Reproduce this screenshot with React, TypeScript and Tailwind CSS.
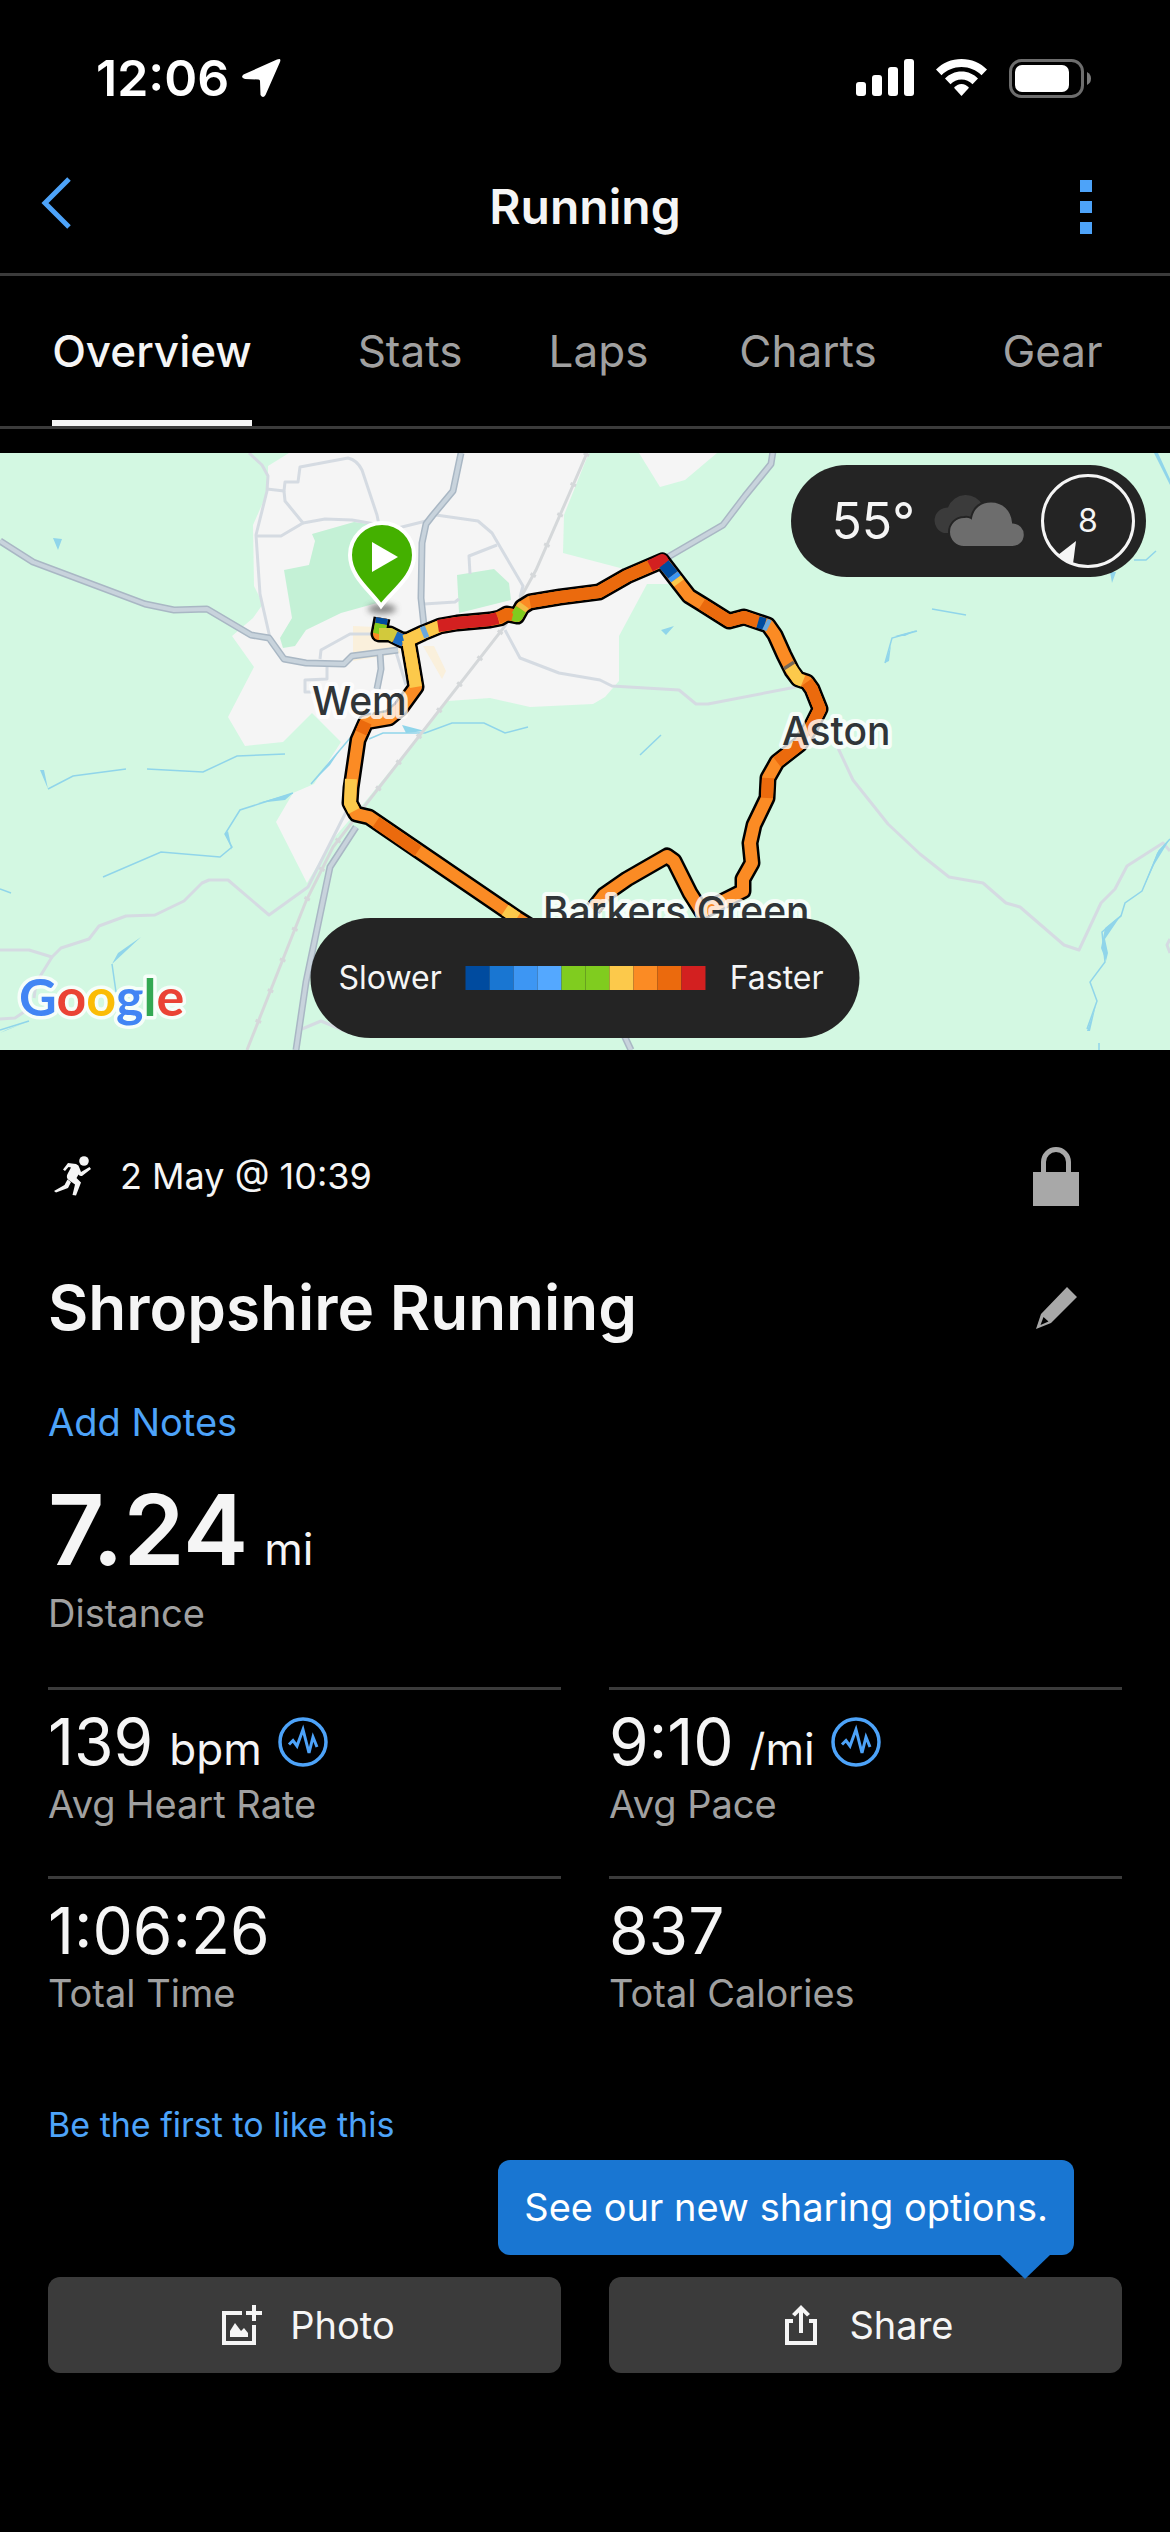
const tabs = [
  { label: "Overview", active: true },
  { label: "Stats", active: false },
  { label: "Laps", active: false },
  { label: "Charts", active: false },
  { label: "Gear", active: false },
];

const stats = [
  { value: "139", unit: "bpm", label: "Avg Heart Rate", pulse: true },
  { value: "9:10", unit: "/mi", label: "Avg Pace", pulse: true },
  { value: "1:06:26", unit: "", label: "Total Time", pulse: false },
  { value: "837", unit: "", label: "Total Calories", pulse: false },
];

const paceColors = [
  "bg-[#004b9f]",
  "bg-[#1976d2]",
  "bg-[#3d96f3]",
  "bg-[#54a8ff]",
  "bg-[#80cc1f]",
  "bg-[#80cc1f]",
  "bg-[#fcc94b]",
  "bg-[#fb8b24]",
  "bg-[#eb6a0d]",
  "bg-[#d32020]",
];

const loopPath =
  "M382 165 L379 181 L390 181 L402 187 L408 187 L423 180 L440 173 L457 170 L490 167 L500 165 L507 161 L517 163 L522 154 L530 149 L560 144 L599 139 L627 123 L662 108 L675 125 L689 143 L702 151 L729 168 L744 164 L768 172 L775 182 L784 202 L792 218 L798 226 L807 229 L812 236 L820 256 L811 274 L800 291 L777 309 L768 325 L767 345 L754 372 L750 390 L752 410 L743 426 L743 438 L723 448 L702 459 L690 440 L674 408 L667 403 L627 426 L604 442 L593 456";

const southPath =
  "M408 187 L412 210 L416 234 L400 256 L389 265 L366 269 L358 287 L351 335 L350 350 L356 361 L369 364 L517 465 L560 492";

const routeSegments = [
  { d: "M382 165 L381 171", color: "#004b9f" },
  { d: "M381 171 L379 181", color: "#80cc1f" },
  { d: "M379 181 L390 181 L395 184", color: "#d2c93c" },
  { d: "M395 184 L404 188", color: "#1c6dc4" },
  { d: "M404 188 L408 187 L423 180 L440 173", color: "#fcc94b" },
  { d: "M422 180 L427 178", color: "#6aa7dc" },
  { d: "M438 173 L457 170 L490 167 L498 165", color: "#d32020" },
  { d: "M498 165 L507 161 L513 162", color: "#eb6a0d" },
  { d: "M513 162 L517 163 L521 156", color: "#80cc1f" },
  { d: "M521 156 L524 152", color: "#f2bd45" },
  { d: "M530 149 L560 144 L599 139 L627 123 L652 112", color: "#eb6a0d" },
  { d: "M650 113 L662 107 L664 111", color: "#d32020" },
  { d: "M664 111 L673 122", color: "#004b9f" },
  { d: "M673 122 L676 126", color: "#3d96f3" },
  { d: "M676 126 L679 130", color: "#fcc94b" },
  { d: "M702 151 L729 168 L744 164 L758 169", color: "#eb6a0d" },
  { d: "M758 169 L765 171", color: "#004b9f" },
  { d: "M765 171 L769 173", color: "#6aa7dc" },
  { d: "M788 211 L790 214", color: "#776a5a" },
  { d: "M790 214 L798 226 L803 228", color: "#fcc94b" },
  { d: "M807 229 L812 236 L820 256 L811 274 L800 291 L777 309", color: "#eb6a0d" },
  { d: "M768 325 L767 345", color: "#eb6a0d" },
  { d: "M408 187 L412 210 L416 234", color: "#fcc94b" },
  { d: "M366 269 L361 280", color: "#eb6a0d" },
  { d: "M351 326 L350 350 L354 358", color: "#fcc94b" },
  { d: "M376 369 L418 398", color: "#eb6a0d" },
  { d: "M505 457 L517 465", color: "#fcc94b" },
];

const mainRoads = [
  "M0 88 L33 109 L145 151 L174 157 L207 156 L251 182 L269 185 L284 206 L306 210 L344 211 L352 203 L398 197",
  "M461 0 L453 38 L433 62 L426 71 L422 90 L421 145 L424 173",
  "M380 200 L381 216 L377 236",
  "M356 374 L330 414 L306 529 L296 597",
  "M773 -2 L771 11 L745 43 L723 72 L668 104",
  "M623 580 L631 597",
];

const minorRoads = [
  "M249 0 L262 12 L268 23 L267 38 L256 82 L260 141 L270 185",
  "M267 36 L284 38 L285 29 L298 29 L300 14 L348 5 Q357 7 362 17 L377 62 L379 72",
  "M284 38 L285 48 L303 70 L281 83 L256 83",
  "M303 70 L325 66 L352 67 L398 75 L426 68 L436 62 L478 68 L492 80 L523 133 L520 144",
  "M497 92 L469 103 L470 121",
  "M424 151 L455 149 L459 146",
  "M320 206 L321 197 L350 181 L375 181",
  "M327 212 L327 226 L305 227 L305 239 L318 239",
  "M396 199 L406 232",
  "M505 177 L520 205 L559 220 L600 227 L612 233 L679 237 L696 251 L708 251 L796 234",
  "M838 295 L853 327 L888 371 L920 401 L949 424 L983 430 L1006 450 L1020 454 L1064 492 L1079 497 L1101 450 L1115 436 L1127 413 L1163 390 L1170 398",
  "M1170 486 L1167 492 L1170 500",
  "M0 497 L29 497 L52 504 L61 495 L89 486 L99 473 L126 463 L155 462 L184 448 L202 430 L209 427 L228 427 L269 462 L308 434 L346 359",
  "M52 504 L36 530 L34 545",
  "M0 566 L15 565 L30 555",
  "M302 576 L321 568 L350 580",
];

const streams = [
  "M48 336 L73 323 L126 316",
  "M147 316 L203 319 L237 303 L285 301",
  "M351 284 L311 331",
  "M293 340 L240 357 L225 381 L232 394 L220 404 L161 399 L103 424",
  "M369 286 L383 280 L425 280 L452 270 L484 270 L505 280 L528 274",
  "M112 511 L116 539",
  "M0 436 L11 440",
  "M0 577 L29 568",
  "M640 302 L661 282",
  "M932 156 L966 162",
  "M885 210 L892 185 L917 178",
  "M1134 107 L1146 107 L1156 98",
  "M1170 386 L1159 398 L1142 438 L1125 450 L1121 463 L1102 479 L1105 509 L1090 529 L1097 548 L1087 576",
  "M1099 590 L1099 597",
];

const ponds =
  "M53 85 L62 86 L58 97Z M661 177 L674 173 L666 182Z M40 317 L44 317 L48 336Z M1110 119 L1116 119 L1112 130Z M402 272 L425 278 L406 280Z M141 484 L112 511 L118 500Z M311 331 L340 297 L330 312Z M293 340 L258 350 L285 347Z M225 381 L232 397 L228 378Z M885 210 L891 192 L889 208Z M895 183 L917 177 L905 183Z M1154 0 L1170 32 L1170 26 L1158 0Z M1170 386 L1157 400 L1142 438 L1154 412Z M1122 461 L1105 475 L1101 495 L1106 508 L1108 500 L1105 486Z M1087 578 L1096 552 L1090 578Z M0 580 L29 568 L6 577Z";

function StatusBar() {
  return (
    <div className="flex items-center justify-between pt-[54px] pl-24 pr-[79px]">
      <div className="flex items-center gap-3">
        <span className="text-[50px] leading-12 font-semibold text-white">12:06</span>
        <svg viewBox="0 0 40 40" className="size-10 fill-white">
          <path d="M36 1.500 Q40.500 -0.500 39 4 L24.500 37 Q22 41 19.500 37 L19 23 Q19 21.500 17.500 21.500 L4 21 Q-1 19.500 2.500 16.500Z" />
        </svg>
      </div>
      <div className="flex items-center gap-[22px]">
        <svg viewBox="0 0 58 38" className="h-[38px] w-[58px] fill-white">
          <rect x="0" y="23" width="10" height="14" rx="3" />
          <rect x="16" y="16" width="10" height="21" rx="3" />
          <rect x="32" y="8" width="10" height="29" rx="3" />
          <rect x="48" y="0" width="10" height="37" rx="3" />
        </svg>
        <svg viewBox="0 0 51 38" className="h-[38px] w-[51px] fill-white">
          <path d="M25.500 0 C35.500 0 44.500 4 51 10.500 L45.500 16.200 C40.200 11 33.200 8 25.500 8 C17.800 8 10.800 11 5.500 16.200 L0 10.500 C6.500 4 15.500 0 25.500 0Z" />
          <path d="M25.500 12.500 C32 12.500 37.800 15.200 42 19.500 L36.500 25.200 C33.600 22.300 29.800 20.500 25.500 20.500 C21.200 20.500 17.400 22.300 14.500 25.200 L9 19.500 C13.200 15.200 19 12.500 25.500 12.500Z" />
          <path d="M25.500 25 C28.400 25 31 26.300 33 28.800 L25.500 37 L18 28.800 C20 26.300 22.600 25 25.500 25Z" />
        </svg>
        <svg viewBox="0 0 82 39" className="h-[39px] w-[82px]">
          <rect x="1.500" y="1.500" width="72" height="36" rx="11" fill="none" stroke="#6d6d6d" strokeWidth="3" />
          <rect x="6" y="6" width="54" height="27" rx="7" fill="#fff" />
          <path d="M78 13 Q82 15 82 19.500 Q82 24 78 26Z" fill="#7a7a7a" />
        </svg>
      </div>
    </div>
  );
}

function Header() {
  return (
    <header className="grid grid-cols-[1fr_auto_1fr] items-center border-b-3 border-[#3b3b3b] px-10 pt-[66px] pb-7">
      <button aria-label="Back" className="justify-self-start pr-8 pb-2">
        <svg viewBox="0 0 32 52" className="h-[52px] w-8">
          <path d="M29 2 L5 26 L29 50" fill="none" stroke="#4da3f9" strokeWidth="5" />
        </svg>
      </button>
      <h1 className="text-[48px] leading-[77px] font-semibold text-[#f5f5f5]">Running</h1>
      <button aria-label="More options" className="justify-self-end pr-[38px]">
        <svg viewBox="0 0 12 54" className="h-[54px] w-3 fill-[#4da3f9]">
          <path d="M0 0h12v12H0zM0 21h12v12H0zM0 42h12v12H0z" />
        </svg>
      </button>
    </header>
  );
}

function TabBar() {
  return (
    <nav className="grid grid-cols-[304fr_212fr_165fr_254fr_235fr] justify-items-center border-b-3 border-[#3b3b3b] text-[44px] leading-12 font-medium">
      {tabs.map((tab) => (
        <a
          key={tab.label}
          href="#"
          className={
            tab.active
              ? "border-b-6 border-[#f5f5f5] pt-[51px] pb-[45px] text-[#f5f5f5]"
              : "pt-[51px] pb-[51px] font-normal text-[#a0a0a0]"
          }
        >
          {tab.label}
        </a>
      ))}
    </nav>
  );
}

function RouteMap() {
  return (
    <svg viewBox="0 0 1170 597" preserveAspectRatio="xMidYMid slice" className="absolute inset-0 size-full" role="img" aria-label="Route map">
      <defs>
        <filter id="pin-shadow" x="-50%" y="-100%" width="200%" height="300%">
          <feGaussianBlur stdDeviation="3" />
        </filter>
      </defs>
      <rect width="1170" height="597" fill="#d3f8e2" />
      <path
        fill="#f5f5f5"
        d="M289 0 L268 13 L268 38 L253 72 L254 133 L263 151 L253 165 L232 183 L254 214 L228 264 L245 293 L283 289 L312 260 L341 289 L314 331 L293 340 L276 369 L307 430 L333 386 L360 355 L421 280 L448 248 L490 245 L530 254 L593 251 L605 244 L619 228 L619 183 L647 131 L673 131 L660 116 L624 116 L563 100 L564 62 L586 7 L589 0Z M639 0 L660 34 L685 27 L717 0Z"
      />
      <path
        fill="#c4f1d6"
        d="M312 81 L354 69 L377 72 L377 150 L341 160 L306 177 L295 193 L283 195 L280 185 L292 165 L284 117 L309 112 L315 88Z M457 122 L494 116 L509 130 L511 147 L459 160Z"
      />
      <path fill="#faf0dc" d="M353 173 L375 174 L400 190 L400 200 L353 208Z M423 193 L434 193 L446 218 L442 226Z" />
      <g fill="none" stroke="#d5dbe2" strokeWidth="3" strokeLinejoin="round">
        {minorRoads.map((d) => <path key={d} d={d} />)}
      </g>
      <g fill="none" stroke="#90d5ea" strokeWidth="1.500">
        {streams.map((d) => <path key={d} d={d} />)}
      </g>
      <path d={ponds} fill="#90d5ea" />
      <path d="M587 0 L574 30 L536 117 L505 173 L360 359 L333 394 L306 448 L247 597" fill="none" stroke="#d5d8da" strokeWidth="3" />
      <path d="M587 0 L574 30 L536 117 L505 173 L360 359 L333 394 L306 448 L247 597" fill="none" stroke="#d5d8da" strokeWidth="6" strokeDasharray="3 30" />
      <g fill="none" strokeLinejoin="round">
        {mainRoads.map((d) => <path key={d} d={d} stroke="#a9b7c4" strokeWidth="7" />)}
        {mainRoads.map((d) => <path key={d} d={d} stroke="#c8d3dc" strokeWidth="4" />)}
      </g>

      <g fill="none" strokeLinejoin="round">
        <path d={southPath} stroke="#000" strokeWidth="17" />
        <path d={loopPath} stroke="#000" strokeWidth="17" />
        <path d={southPath} stroke="#fb8b24" strokeWidth="12" />
        <path d={loopPath} stroke="#fb8b24" strokeWidth="12" />
        {routeSegments.map((s) => <path key={s.d} d={s.d} stroke={s.color} strokeWidth="12" />)}
      </g>

      <ellipse cx="382" cy="156" rx="14" ry="5" fill="#555" opacity="0.700" filter="url(#pin-shadow)" />
      <path
        d="M381 153 C371 138 350 124 350 102 A32 32 0 0 1 414 102 C414 124 392 138 381 153Z"
        fill="#44b000"
        stroke="#fff"
        strokeWidth="4"
      />
      <path d="M372 89 L398 104 L372 119Z" fill="#fff" />

      <g
        className="font-[Inter,sans-serif] text-[39px] font-medium"
        fill="#303538"
        stroke="#fff"
        strokeOpacity="0.800"
        strokeWidth="8"
        strokeLinejoin="round"
        paintOrder="stroke"
      >
        <text x="312" y="262">Wem</text>
        <text x="782" y="292">Aston</text>
        <text x="543" y="472">Barkers Green</text>
      </g>
      <text x="19" y="563" className="font-[Lato,sans-serif] text-[52px] font-bold" stroke="#fff" strokeOpacity="0.800" strokeWidth="7" strokeLinejoin="round" paintOrder="stroke">
        <tspan fill="#4285f4">G</tspan>
        <tspan fill="#ea4335">o</tspan>
        <tspan fill="#fbbc05">o</tspan>
        <tspan fill="#4285f4">g</tspan>
        <tspan fill="#34a853">l</tspan>
        <tspan fill="#ea4335">e</tspan>
      </text>
    </svg>
  );
}

function WeatherBadge() {
  return (
    <div className="absolute top-3 right-6 flex h-28 items-center rounded-full bg-[#242424] pr-[11px] pl-10 text-[#f5f5f5]">
      <span className="text-[50px]">55°</span>
      <svg viewBox="0 0 94 52" className="ml-4 h-[52px] w-[94px]">
        <path d="M13 38 A13 13 0 0 1 17 12.500 A19 19 0 0 1 52 11 L40 22 L20 30 L19 38Z" fill="#3b3b3b" />
        <path
          d="M33 52 A15 15 0 0 1 33 22 Q37 21 40 23 C42 12 50 6.500 60 6.500 C72 6.500 81 15 82 27.500 A12 12 0 0 1 81 52Z"
          fill="#6d6d6d"
          stroke="#242424"
          strokeWidth="2"
        />
      </svg>
      <div className="relative ml-4 grid size-[94px] place-items-center rounded-full border-3 border-[#f5f5f5] text-[32px]">
        8
        <svg viewBox="0 0 94 94" className="absolute -inset-[3px] fill-[#f5f5f5]">
          <path d="M35 67 L17 81 Q23 87 32 90Z" />
        </svg>
      </div>
    </div>
  );
}

function PaceLegend() {
  return (
    <div className="absolute bottom-3 left-1/2 flex h-30 -translate-x-1/2 items-center gap-6 rounded-full bg-[#242424] pr-9 pl-7 text-[32px] text-[#f5f5f5]">
      <span>Slower</span>
      <div className="flex">
        {paceColors.map((color, i) => (
          <span key={i} className={`h-6 w-6 ${color}`} />
        ))}
      </div>
      <span>Faster</span>
    </div>
  );
}

function PulseIcon() {
  return (
    <svg viewBox="0 0 50 50" className="size-[50px] shrink-0" fill="none" stroke="#4da3f9">
      <circle cx="25" cy="25" r="23" strokeWidth="3.500" />
      <path d="M11 27.500 L15 23.500 L19 29 L25 12.500 L31 36 L35 20 L39 30" strokeWidth="3" strokeLinejoin="miter" />
    </svg>
  );
}

export default function App() {
  return (
    <div className="min-h-screen bg-black font-[Inter,sans-serif] text-[#f5f5f5]">
      <StatusBar />
      <Header />
      <TabBar />

      <section className="relative mt-6 h-[597px] overflow-hidden">
        <RouteMap />
        <WeatherBadge />
        <PaceLegend />
      </section>

      <main className="px-12">
        <div className="flex items-center justify-between pt-24 pr-[43px]">
          <div className="flex items-center gap-7">
            <svg viewBox="0 0 38 40" className="ml-[6px] h-10 w-[38px] fill-[#f5f5f5]">
              <circle cx="30" cy="5" r="4.800" />
              <path d="M14 7 L22 8 Q25 9 25.500 12 L27 16 L35.500 11 L37 13 L28 20 Q26 20.500 24.500 18.500 L22.500 22 L27 26.500 L22 39.500 L18.500 39 L21 28.500 L14 23.500 Q12 21 13.500 18 L17 11.500 L14.500 11 L11 15 L9 13.500Z" />
              <path d="M13.500 23.500 L17 26 L14 32 L2 36.500 L0 35 L10.500 29Z" />
            </svg>
            <p className="text-[36px]">2 May @ 10:39</p>
          </div>
          <button aria-label="Privacy">
            <svg viewBox="0 0 46 60" className="h-[60px] w-[46px] fill-[#a8a8a8]">
              <path d="M0 26 H8 V16 A15 15 0 0 1 38 16 V26 H46 V60 H0Z M13 26 H33 V16 A10 10 0 0 0 13 16Z" fillRule="evenodd" />
            </svg>
          </button>
        </div>

        <div className="mt-[60px] flex items-center justify-between pr-[45px]">
          <h2 className="text-[62px] leading-[84px] font-semibold">Shropshire Running</h2>
          <button aria-label="Edit title">
            <svg viewBox="0 0 41 42" className="h-[42px] w-[41px] fill-[#a8a8a8]">
              <path d="M31 0 L41 10 L15 36 L0 42 L5 27Z M7.500 30 L4.500 38 L12.500 34.500Z" fillRule="evenodd" />
            </svg>
          </button>
        </div>

        <a href="#" className="mt-12 block text-[38px] leading-12 text-[#4da3f9]">Add Notes</a>

        <div className="mt-11">
          <p className="flex items-baseline gap-4 leading-20">
            <span className="text-[98px] font-semibold">7.24</span>
            <span className="text-[44px]">mi</span>
          </p>
          <p className="text-[38px] leading-12 text-[#a0a0a0]">Distance</p>
        </div>

        <dl className="mt-[50px] grid grid-cols-2 gap-x-12">
          {stats.map((stat) => (
            <div key={stat.label} className="flex h-[189px] flex-col-reverse justify-end border-t-3 border-[#3b3b3b] pt-[18px]">
              <dt className="text-[38px] leading-12 text-[#a0a0a0]">{stat.label}</dt>
              <dd className="mb-1 flex h-[68px] items-center gap-4 leading-[68px]">
                <span className="flex items-baseline gap-4">
                  <span className="text-[64px]">{stat.value}</span>
                  {stat.unit && <span className="text-[44px] leading-none">{stat.unit}</span>}
                </span>
                {stat.pulse && <PulseIcon />}
              </dd>
            </div>
          ))}
        </dl>

        <a href="#" className="mt-9 block text-[34px] leading-12 text-[#4da3f9]">Be the first to like this</a>

        <div className="relative mt-32 grid grid-cols-2 gap-12 text-[38px]">
          <button className="flex h-24 items-center justify-center gap-7 rounded-xl bg-[#3b3b3b] pl-2">
            <svg viewBox="0 0 40 40" className="size-10 fill-[#f5f5f5]">
              <path d="M0 6 H20 V10 H4 V36 H30 V20 H34 V40 H0Z" />
              <path d="M30 0 H34 V6 H40 V10 H34 V16 H30 V10 H24 V6 H30Z" />
              <path d="M8 32 V26 L13 18 L19 26 L22 23 L26 28 V32Z" />
            </svg>
            Photo
          </button>
          <button className="flex h-24 items-center justify-center gap-8 rounded-xl bg-[#3b3b3b] pl-2">
            <svg viewBox="0 0 32 40" className="h-10 w-8 fill-[#f5f5f5]">
              <path d="M0 14 H8 V18 H4 V36 H28 V18 H24 V14 H32 V40 H0Z" />
              <path d="M16 0 L25 9 L22 11.500 L18 7.500 V28 H14 V7.500 L10 11.500 L7 9Z" />
            </svg>
            Share
          </button>
          <div role="tooltip" className="absolute right-12 bottom-[118px] flex h-[95px] items-center rounded-xl bg-[#1976d2] px-[26px] text-white">
            See our new sharing options.
            <svg viewBox="0 0 50 24" className="absolute top-full right-6 h-6 w-[50px] fill-[#1976d2]">
              <path d="M0 0 H50 L25 24Z" />
            </svg>
          </div>
        </div>
      </main>
    </div>
  );
}
